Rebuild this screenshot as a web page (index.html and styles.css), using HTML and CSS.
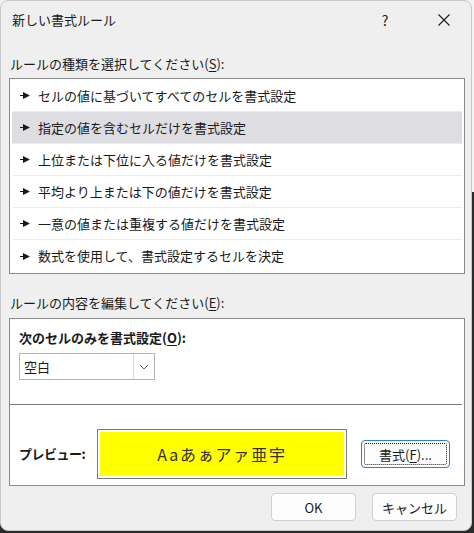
FILE: index.html
```html
<!DOCTYPE html>
<html lang="ja">
<head>
<meta charset="utf-8">
<title>新しい書式ルール</title>
<link rel="stylesheet" href="styles.css">
</head>
<body>
<div class="dialog">
  <div class="titlebar">
    <span class="title">新しい書式ルール</span>
    <span class="help">?</span>
    <span class="close">
      <svg width="14" height="14" viewBox="0 0 14 14"><path d="M1.5 1.5 L12.5 12.5 M12.5 1.5 L1.5 12.5" stroke="#1a1a1a" stroke-width="1.1" fill="none"/></svg>
    </span>
  </div>
  <div class="content">
    <div class="label">ルールの種類を選択してください(<u>S</u>):</div>
    <ul class="rules">
      <li><svg class="bullet" width="10" height="7" viewBox="0 0 10 7"><path d="M0 3h4v1H0z M3 0 L10 3.5 L3 7z" fill="#1a1a1a"/></svg>セルの値に基づいてすべてのセルを書式設定</li>
      <li class="selected"><svg class="bullet" width="10" height="7" viewBox="0 0 10 7"><path d="M0 3h4v1H0z M3 0 L10 3.5 L3 7z" fill="#1a1a1a"/></svg>指定の値を含むセルだけを書式設定</li>
      <li><svg class="bullet" width="10" height="7" viewBox="0 0 10 7"><path d="M0 3h4v1H0z M3 0 L10 3.5 L3 7z" fill="#1a1a1a"/></svg>上位または下位に入る値だけを書式設定</li>
      <li><svg class="bullet" width="10" height="7" viewBox="0 0 10 7"><path d="M0 3h4v1H0z M3 0 L10 3.5 L3 7z" fill="#1a1a1a"/></svg>平均より上または下の値だけを書式設定</li>
      <li><svg class="bullet" width="10" height="7" viewBox="0 0 10 7"><path d="M0 3h4v1H0z M3 0 L10 3.5 L3 7z" fill="#1a1a1a"/></svg>一意の値または重複する値だけを書式設定</li>
      <li><svg class="bullet" width="10" height="7" viewBox="0 0 10 7"><path d="M0 3h4v1H0z M3 0 L10 3.5 L3 7z" fill="#1a1a1a"/></svg>数式を使用して、書式設定するセルを決定</li>
    </ul>
    <div class="label label-edit">ルールの内容を編集してください(<u>E</u>):</div>
    <div class="editor">
      <div class="condition">
        <div class="strong">次のセルのみを書式設定(<u>O</u>):</div>
        <div class="select">
          <span class="select-value">空白</span>
          <span class="select-arrow">
            <svg width="10" height="6" viewBox="0 0 10 6"><path d="M1 1 L5 5 L9 1" stroke="#606060" stroke-width="1" fill="none"/></svg>
          </span>
        </div>
      </div>
      <div class="divider"></div>
      <div class="preview-row">
        <span class="strong preview-label">プレビュー:</span>
        <div class="preview"><div class="sample">Aaあぁアァ亜宇</div></div>
        <button class="btn btn-format"><span class="focus">書式(<u>F</u>)...</span></button>
      </div>
    </div>
    <div class="actions">
      <button class="btn">OK</button>
      <button class="btn">キャンセル</button>
    </div>
  </div>
</div>
</body>
</html>
```
FILE: styles.css
```css
* { box-sizing: border-box; }

html, body {
  margin: 0;
  padding: 0;
}

body {
  width: 474px;
  height: 533px;
  background: linear-gradient(to bottom, #f4f4f4 0, #f4f4f4 36%, #2a2a2a 36%, #2a2a2a 100%);
  font-family: "Noto Sans CJK JP", "Noto Sans", sans-serif;
  font-size: 13px;
  line-height: 16px;
  color: #1a1a1a;
  overflow: hidden;
}

.dialog {
  width: 472px;
  height: 531px;
  background: #efefef;
  border: 1px solid #c8c8c8;
  border-radius: 8px;
  display: flex;
  flex-direction: column;
}

.titlebar {
  height: 37px;
  display: flex;
  align-items: center;
  padding-left: 11px;
}

.title {
  flex: 1;
  padding-top: 1px;
}

.help {
  width: 14px;
  text-align: center;
  margin-right: 45px;
  font-size: 14px;
  padding-top: 1px;
}

.close {
  display: flex;
  margin-right: 20px;
}

.content {
  padding: 18px 0 0 8px;
  display: flex;
  flex-direction: column;
}

.label {
  height: 16px;
  padding-left: 1px;
}

.label u, .strong u, .btn u { text-underline-offset: 2px; }

.rules {
  list-style: none;
  margin: 6px 0 0;
  padding: 1px 2px 1px 2px;
  width: 456px;
  height: 196px;
  background: #fff;
  border: 1px solid #8a8a8a;
}

.rules li {
  height: 32px;
  display: flex;
  align-items: center;
  padding-left: 8px;
  border-bottom: 1px solid #ececec;
  white-space: nowrap;
}

.rules li:last-child { border-bottom: none; }

.rules li.selected { background: #dedee2; }

.bullet {
  flex: none;
  margin-right: 8px;
}

.label-edit {
  margin-top: 21px;
}

.editor {
  margin-top: 7px;
  width: 456px;
  height: 168px;
  background: #fff;
  border: 1px solid #8a8a8a;
  display: flex;
  flex-direction: column;
}

.condition {
  padding: 11px 0 0 9px;
  height: 85px;
}

.strong { font-weight: 700; }

.select {
  margin-top: 7px;
  width: 136px;
  height: 27px;
  border: 1px solid #b4b4b4;
  display: flex;
  align-items: center;
}

.select-value {
  flex: 1;
  padding-left: 4px;
}

.select-arrow {
  width: 21px;
  height: 25px;
  border-left: 1px solid #d8d8d8;
  display: flex;
  align-items: center;
  justify-content: center;
}

.divider {
  height: 1px;
  margin: 0 2px 0 0;
  background: #7a7a7a;
}

.preview-row {
  display: flex;
  align-items: center;
  padding: 24px 0 0 9px;
}

.preview-label {
  width: 78px;
  letter-spacing: -0.5px;
}

.preview {
  width: 250px;
  height: 50px;
  border: 1px solid #7a7a7a;
  padding: 2px;
  background: #fff;
}

.sample {
  height: 100%;
  background: #ffff00;
  display: flex;
  align-items: center;
  justify-content: center;
  font-size: 16px;
  letter-spacing: 1.8px;
  color: #333;
  font-weight: 400;
}

.btn {
  font-family: inherit;
  font-size: 13px;
  color: #1a1a1a;
  background: #fdfdfd;
  border: 1px solid #d0d0d0;
  border-radius: 4px;
  width: 85px;
  height: 28px;
  padding: 0;
}

.btn-format {
  margin-left: 14px;
  width: 89px;
  border: 1px solid #2f7fc8;
  padding: 2px;
}

.btn-format .focus {
  display: flex;
  align-items: center;
  justify-content: center;
  height: 100%;
  border: 1px dotted #222;
  border-radius: 2px;
}

.actions {
  display: flex;
  justify-content: flex-end;
  gap: 16px;
  margin-top: 7px;
  padding-right: 14px;
}
```
